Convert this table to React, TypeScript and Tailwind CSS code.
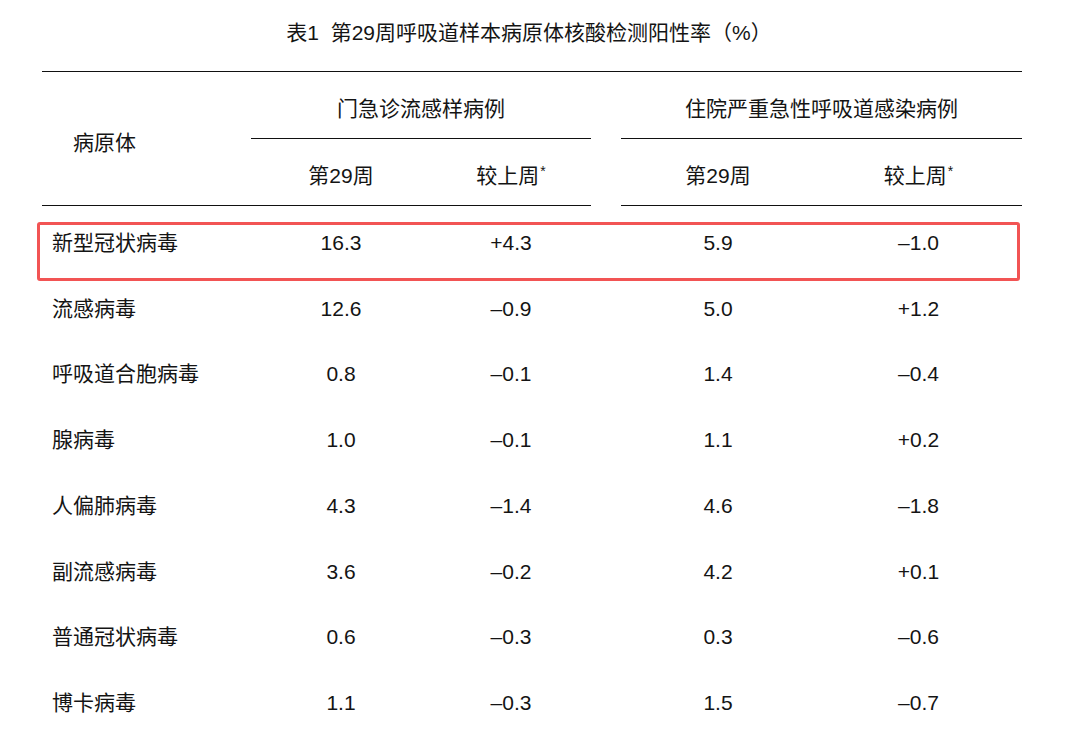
import React from "react";

const rows: [string, string, string, string, string][] = [
  ["新型冠状病毒", "16.3", "+4.3", "5.9", "–1.0"],
  ["流感病毒", "12.6", "–0.9", "5.0", "+1.2"],
  ["呼吸道合胞病毒", "0.8", "–0.1", "1.4", "–0.4"],
  ["腺病毒", "1.0", "–0.1", "1.1", "+0.2"],
  ["人偏肺病毒", "4.3", "–1.4", "4.6", "–1.8"],
  ["副流感病毒", "3.6", "–0.2", "4.2", "+0.1"],
  ["普通冠状病毒", "0.6", "–0.3", "0.3", "–0.6"],
  ["博卡病毒", "1.1", "–0.3", "1.5", "–0.7"],
];

function Star() {
  return <span className="text-[14px] relative top-[-7px] ml-[1px]">*</span>;
}

export default function App() {
  return (
    <div
      className="relative w-[1080px] h-[732px] bg-white text-[#141414] overflow-hidden"
      style={{ fontFamily: '"Liberation Sans", "Noto Sans CJK SC", sans-serif' }}
    >
      <div className="h-[71px] flex items-start justify-center pt-[19px] pr-[22px] text-[21px] leading-[28px]">
        表1&nbsp;&nbsp;第29周呼吸道样本病原体核酸检测阳性率（%）
      </div>
      <div className="ml-[42px] w-[980px]">
        <div className="grid grid-cols-[209px_180px_160px_30px_194px_207px] border-t border-[#111] text-[21px]">
          {/* header */}
          <div className="row-span-2 flex items-center pl-[31px] pt-[8px] border-b border-[#111]">病原体</div>
          <div className="col-span-2 h-[67px] flex items-center justify-center pt-[8px] border-b border-[#111]">
            门急诊流感样病例
          </div>
          <div className="row-span-2"></div>
          <div className="col-span-2 h-[67px] flex items-center justify-center pt-[8px] border-b border-[#111]">
            住院严重急性呼吸道感染病例
          </div>
          <div className="h-[67px] flex items-center justify-center pt-[8px] border-b border-[#111]">第29周</div>
          <div className="h-[67px] flex items-center justify-center pt-[8px] border-b border-[#111]">
            <span>较上周<Star /></span>
          </div>
          <div className="h-[67px] flex items-center justify-center pt-[8px] border-b border-[#111]">第29周</div>
          <div className="h-[67px] flex items-center justify-center pt-[8px] border-b border-[#111]">
            <span>较上周<Star /></span>
          </div>
          {/* body */}
          {rows.map((r) => (
            <React.Fragment key={r[0]}>
              <div className="h-[65.7px] flex items-center pl-[10px] pt-[8px]">{r[0]}</div>
              <div className="h-[65.7px] flex items-center justify-center pt-[8px]">{r[1]}</div>
              <div className="h-[65.7px] flex items-center justify-center pt-[8px]">{r[2]}</div>
              <div className="h-[65.7px]"></div>
              <div className="h-[65.7px] flex items-center justify-center pt-[8px]">{r[3]}</div>
              <div className="h-[65.7px] flex items-center justify-center pt-[8px]">{r[4]}</div>
            </React.Fragment>
          ))}
        </div>
      </div>
      <div className="absolute left-[37px] top-[222px] w-[983px] h-[59px] border-[3px] border-[#f25454] rounded-[3px]"></div>
    </div>
  );
}
